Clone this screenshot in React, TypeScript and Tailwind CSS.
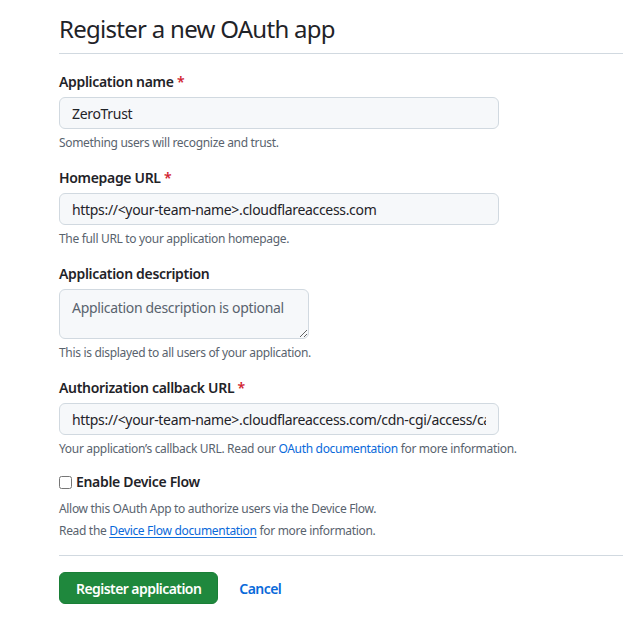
import { useState } from 'react'

const fieldInput =
  'block h-8 w-[440px] rounded-md border border-[#d1d9e0] bg-[#f6f8fa] px-3 text-[14px] text-[#1f2328] outline-none'

function Label({ text, required }: { text: string; required?: boolean }) {
  return (
    <label className="mb-[5px] block text-[14px] font-semibold leading-5 text-[#1f2328]">
      {text}
      {required ? <span className="text-[#d1242f]"> *</span> : null}
    </label>
  )
}

function Note({ children }: { children: React.ReactNode }) {
  return <p className="mt-[5px] text-[12px] leading-[18px] text-[#59636e]">{children}</p>
}

export default function App() {
  const [name, setName] = useState('ZeroTrust')
  const [homepage, setHomepage] = useState('https://<your-team-name>.cloudflareaccess.com')
  const [callback, setCallback] = useState(
    'https://<your-team-name>.cloudflareaccess.com/cdn-cgi/access/callback',
  )
  const [deviceFlow, setDeviceFlow] = useState(false)

  return (
    <main
      className="min-h-screen overflow-hidden bg-white pl-[59px] tracking-[-0.02em] text-[#1f2328]"
      style={{ fontFamily: '"Noto Sans", "Open Sans", sans-serif' }}
    >
      <div className="border-b border-[#d1d9e0] pt-[11px] pb-[6px]">
        <h1 className="text-[24px] font-normal leading-9 tracking-[-0.03em]">
          Register a new OAuth app
        </h1>
      </div>

      <form className="pt-[18px]" onSubmit={(e) => e.preventDefault()}>
        <div className="flex flex-col gap-4">
          <div>
            <Label text="Application name" required />
            <input className={fieldInput} value={name} onChange={(e) => setName(e.target.value)} />
            <Note>Something users will recognize and trust.</Note>
          </div>

          <div>
            <Label text="Homepage URL" required />
            <input
              className={fieldInput}
              value={homepage}
              onChange={(e) => setHomepage(e.target.value)}
            />
            <Note>The full URL to your application homepage.</Note>
          </div>

          <div>
            <Label text="Application description" />
            <textarea
              className="block h-[50px] w-[250px] resize-y rounded-md border border-[#d1d9e0] bg-[#f6f8fa] px-3 py-[8px] text-[14px] leading-5 text-[#1f2328] outline-none placeholder:text-[#59636e]"
              placeholder="Application description is optional"
            />
            <Note>This is displayed to all users of your application.</Note>
          </div>

          <div>
            <Label text="Authorization callback URL" required />
            <input
              className={fieldInput}
              value={callback}
              onChange={(e) => setCallback(e.target.value)}
            />
            <Note>
              Your application’s callback URL. Read our{' '}
              <a href="#" className="text-[#0969da]">
                OAuth documentation
              </a>{' '}
              for more information.
            </Note>
          </div>
        </div>

        <div className="mt-[14px]">
          <label className="flex items-center gap-[4px] text-[14px] font-semibold leading-5">
            <input
              type="checkbox"
              checked={deviceFlow}
              onChange={(e) => setDeviceFlow(e.target.checked)}
              className="m-0 h-[13px] w-[13px]"
            />
            Enable Device Flow
          </label>
          <p className="mt-[8px] text-[12px] leading-[18px] text-[#59636e]">
            Allow this OAuth App to authorize users via the Device Flow.
          </p>
          <p className="mt-1 text-[12px] leading-[18px] text-[#59636e]">
            Read the{' '}
            <a href="#" className="text-[#0969da] underline underline-offset-2">
              Device Flow documentation
            </a>{' '}
            for more information.
          </p>
        </div>

        <div className="mt-[15px] border-t border-[#d1d9e0] pt-4">
          <div className="flex items-center gap-[21px]">
            <button
              type="submit"
              className="h-8 rounded-md border border-[#1a7f37] bg-[#1f883d] px-4 text-[14px] font-semibold tracking-[-0.04em] text-white"
            >
              Register application
            </button>
            <a href="#" className="text-[14px] font-semibold tracking-[-0.04em] text-[#0969da]">
              Cancel
            </a>
          </div>
        </div>
      </form>
    </main>
  )
}
